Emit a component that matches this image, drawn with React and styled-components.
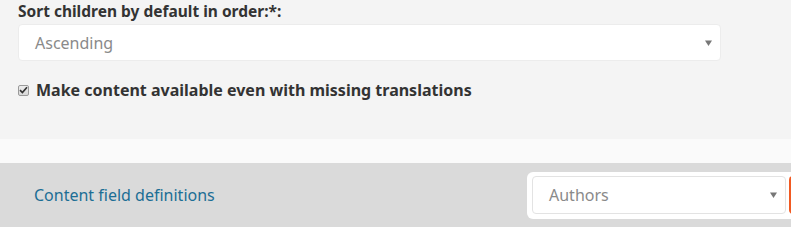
import styled, { createGlobalStyle } from "styled-components";

const GlobalStyle = createGlobalStyle`
  html, body {
    margin: 0;
    padding: 0;
    background: #f4f4f4;
    font-family: "Noto Sans", "Open Sans", sans-serif;
    overflow: hidden;
  }
  * { box-sizing: border-box; }
`;

function Arrow() {
  return (
    <svg width="7" height="6" viewBox="0 0 7 6">
      <path d="M0 0.5 H7 L3.5 6 Z" fill="#777" />
    </svg>
  );
}

export default function App() {
  return (
    <Page>
      <GlobalStyle />
      <FormSection>
        <FieldLabel>Sort children by default in order:*:</FieldLabel>
        <Select>
          <SelectValue>Ascending</SelectValue>
          <Arrow />
        </Select>
        <CheckRow>
          <CheckBox>
            <svg width="9" height="8" viewBox="0 0 9 8">
              <path d="M1 4.2 L3.4 6.5 L8 1.2" stroke="#333" strokeWidth="1.7" fill="none" />
            </svg>
          </CheckBox>
          <CheckLabel>Make content available even with missing translations</CheckLabel>
        </CheckRow>
      </FormSection>
      <Spacer />
      <Footer>
        <FooterLink href="#">Content field definitions</FooterLink>
        <AddGroup>
          <Select compact>
            <SelectValue>Authors</SelectValue>
            <Arrow />
          </Select>
          <AddButton />
        </AddGroup>
      </Footer>
    </Page>
  );
}

const Page = styled.div`
  width: 100%;
  display: flex;
  flex-direction: column;
`;

const FormSection = styled.section`
  height: 139px;
  padding: 1px 70px 0 18px;
  background: #f4f4f4;
  display: flex;
  flex-direction: column;
`;

const FieldLabel = styled.label`
  font-size: 15.5px;
  font-weight: 700;
  line-height: 20px;
  color: #333;
`;

const Select = styled.div`
  margin-top: ${(props) => (props.compact ? "0" : "3px")};
  width: ${(props) => (props.compact ? "254px" : "100%")};
  flex-shrink: 0;
  height: ${(props) => (props.compact ? "38px" : "37px")};
  background: #fff;
  border: 1px solid ${(props) => (props.compact ? "#e3e3e3" : "#ececec")};
  border-radius: 4px;
  display: flex;
  align-items: center;
  justify-content: space-between;
  padding: 0 8px 0 16px;
`;

const SelectValue = styled.span`
  font-size: 16px;
  color: #8a8a8a;
`;

const CheckRow = styled.div`
  margin-top: 19px;
  height: 20px;
  display: flex;
  align-items: center;
  gap: 7px;
`;

const CheckBox = styled.span`
  width: 11px;
  height: 11px;
  border: 1px solid #9a9a9a;
  border-radius: 2px;
  background: linear-gradient(#eee, #d8d8d8);
  display: flex;
  align-items: center;
  justify-content: center;
`;

const CheckLabel = styled.span`
  font-size: 16px;
  font-weight: 700;
  color: #333;
`;

const Spacer = styled.div`
  height: 24px;
  background: #fafafa;
`;

const Footer = styled.footer`
  height: 64px;
  background: #dadada;
  display: flex;
  align-items: center;
  justify-content: space-between;
  padding-left: 34px;
  overflow: hidden;
`;

const FooterLink = styled.a`
  font-size: 16px;
  color: #1c6e95;
  text-decoration: none;
`;

const AddGroup = styled.div`
  width: 264px;
  height: 47px;
  margin-top: 1px;
  background: #fff;
  border-radius: 6px 0 0 6px;
  display: flex;
  align-items: center;
  gap: 3px;
  padding: 0 0 1px 5px;
`;

const AddButton = styled.button`
  flex-shrink: 0;
  width: 80px;
  height: 38px;
  border: none;
  border-radius: 4px 0 0 4px;
  background: #f15a22;
`;
